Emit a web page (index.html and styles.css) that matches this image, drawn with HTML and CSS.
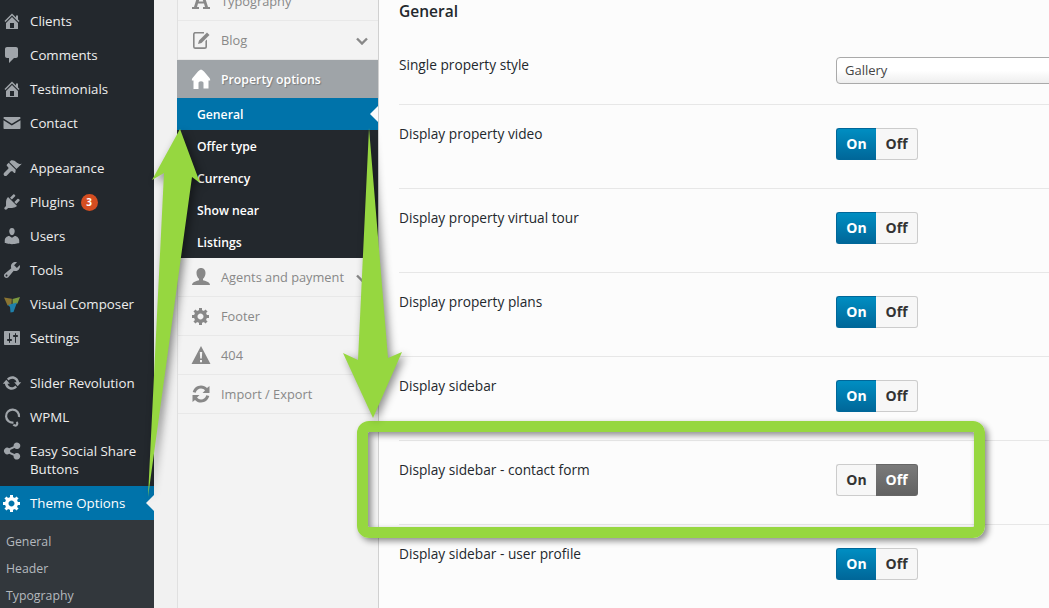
FILE: index.html
```html
<!DOCTYPE html>
<html lang="en">
<head>
<meta charset="utf-8">
<title>Theme Options</title>
<link rel="stylesheet" href="styles.css">
</head>
<body>
<svg class="defs" width="0" height="0" aria-hidden="true">
  <symbol id="i-home" viewBox="0 0 20 20"><path d="M16 8.5l1.53 1.53-1.06 1.06L10 4.62l-6.47 6.47-1.06-1.06L10 2.5l4 4v-2h2v4zm-6-2.46l6 5.99V18H4v-5.97zM12 17v-5H8v5h4z"/></symbol>
  <symbol id="i-comment" viewBox="0 0 20 20"><path d="M5 2h9c1.1 0 2 .9 2 2v7c0 1.1-.9 2-2 2h-2l-5 5v-5H5c-1.1 0-2-.9-2-2V4c0-1.1.9-2 2-2z"/></symbol>
  <symbol id="i-mail" viewBox="0 0 20 20"><path d="M3 4h14.5c.5 0 1 .4 1 1v.4l-8.7 5.4-8.3-5.4V5c0-.6.4-1 1-1zM1.5 7.300l8.300 5.300 8.700-5.300V15c0 .6-.5 1-1 1H2.500c-.6 0-1-.4-1-1z"/></symbol>
  <symbol id="i-brush" viewBox="0 0 20 20"><path d="M14.480 11.060L7.410 3.990l1.500-1.500c.5-.56 2.300-.47 3.510.32 1.210.8 1.430 1.280 2.910 2.100 1.180.64 2.450 1.260 4.450.85zm-.71.71L6.700 4.700 4.930 6.470c-.39.39-.39 1.020 0 1.410l1.060 1.060c.59.59.59 1.540 0 2.120L2.200 14.800c-.8.8-.8 1.900-.1 2.700.8.8 2 .7 2.800-.1l3.800-3.800c.59-.59 1.540-.59 2.120 0l1.060 1.060c.39.39 1.020.39 1.410 0z"/></symbol>
  <symbol id="i-plug" viewBox="0 0 20 20"><path d="M13.110 4.360L9.870 7.600 8 5.730l3.240-3.240c.35-.34 1.050-.2 1.560.32.52.51.66 1.210.31 1.550zm-8 1.770l.91-1.120 9.010 9.010-1.190.84c-.71.71-2.630 1.160-3.820 1.160H6.140L4.900 17.260c-.59.59-1.540.59-2.120 0-.59-.58-.59-1.530 0-2.120l1.240-1.240v-3.880c0-1.130.4-3.190 1.090-3.890zm7.260 3.970l3.240-3.240c.34-.35 1.040-.21 1.550.31.52.51.66 1.210.31 1.550l-3.240 3.250z"/></symbol>
  <symbol id="i-user" viewBox="0 0 20 20"><path d="M10 9.250c-2.270 0-2.730-3.440-2.730-3.440C7 4.020 7.820 2 9.970 2c2.160 0 2.980 2.020 2.710 3.810 0 0-.41 3.440-2.68 3.440zm0 2.570L12.720 10c2.390 0 4.520 2.330 4.520 4.530v2.490s-3.650 1.130-7.240 1.130c-3.650 0-7.240-1.130-7.240-1.130v-2.490c0-2.250 1.940-4.480 4.470-4.480z"/></symbol>
  <symbol id="i-wrench" viewBox="0 0 20 20"><path d="M16.680 9.770c-1.340 1.340-3.300 1.670-4.950.99l-5.410 6.520c-.99.99-2.590.99-3.580 0s-.99-2.590 0-3.570l6.520-5.420c-.68-1.650-.35-3.610.99-4.950 1.280-1.280 3.120-1.620 4.720-1.060l-2.890 2.890 2.820 2.820 2.860-2.870c.53 1.580.18 3.390-1.080 4.650zM3.810 16.210c.4.39 1.040.39 1.430 0 .4-.4.4-1.040 0-1.430-.39-.4-1.030-.4-1.430 0-.39.39-.39 1.030 0 1.430z"/></symbol>
  <symbol id="i-sliders" viewBox="0 0 20 20"><path d="M18 16V4c0-.55-.45-1-1-1H3c-.55 0-1 .45-1 1v12c0 .55.45 1 1 1h14c.55 0 1-.45 1-1zM8 11h1c.55 0 1 .45 1 1s-.45 1-1 1H8v1.500c0 .28-.22.5-.5.5s-.5-.22-.5-.5V13H6c-.55 0-1-.45-1-1s.45-1 1-1h1V5.500c0-.28.22-.5.5-.5s.5.22.5.5V11zm5-2h-1c-.55 0-1-.45-1-1s.45-1 1-1h1V5.500c0-.28.22-.5.5-.5s.5.22.5.5V7h1c.55 0 1 .45 1 1s-.45 1-1 1h-1v5.500c0 .28-.22.5-.5.5s-.5-.22-.5-.5V9z"/></symbol>
  <symbol id="i-update" viewBox="0 0 20 20"><path d="M10.200 3.280c3.530 0 6.430 2.610 6.920 6h2.080l-3.500 4-3.500-4h2.320c-.45-1.970-2.210-3.450-4.320-3.450-1.450 0-2.730.71-3.540 1.780L4.950 5.660C6.230 4.200 8.110 3.280 10.200 3.280zm-.4 13.440c-3.520 0-6.430-2.610-6.920-6H.8l3.500-4c1.170 1.330 2.330 2.670 3.500 4H5.480c.45 1.970 2.210 3.450 4.320 3.450 1.450 0 2.730-.71 3.540-1.780l1.710 1.950c-1.280 1.460-3.150 2.380-5.250 2.380z"/></symbol>
  <symbol id="i-share" viewBox="0 0 20 20"><path d="M15 1.500a3.300 3.300 0 1 1-2.500 5.500L8.100 9.100a3.300 3.300 0 0 1 0 1.800l4.400 2.100a3.300 3.300 0 1 1-.9 1.800l-4.400-2.100a3.300 3.300 0 1 1 0-5.400l4.400-2.100A3.300 3.300 0 0 1 15 1.500z"/></symbol>
  <symbol id="i-gear" viewBox="0 0 20 20"><path d="M18 12h-2.180c-.17.7-.44 1.350-.81 1.930l1.540 1.540-2.100 2.100-1.540-1.540c-.58.36-1.230.63-1.910.79V19H8v-2.180c-.68-.16-1.330-.43-1.910-.79l-1.540 1.540-2.120-2.120 1.540-1.540c-.36-.58-.63-1.230-.79-1.910H1V9.030h2.170c.16-.7.44-1.350.8-1.940L2.430 5.550l2.100-2.100 1.540 1.540c.58-.37 1.240-.64 1.930-.81V2h3v2.180c.68.16 1.330.43 1.910.79l1.540-1.540 2.120 2.120-1.540 1.540c.36.59.64 1.240.8 1.940H18V12zm-8.500 1.500c1.660 0 3-1.340 3-3s-1.340-3-3-3-3 1.340-3 3 1.340 3 3 3z"/></symbol>
  <symbol id="n-a" viewBox="0 0 20 20"><path d="M8 0h4l5 16h2v2h-7v-2h2l-1-3.500H7L6 16h2v2H1v-2h2zm2 3.500L7.700 10.500h4.600z"/></symbol>
  <symbol id="n-edit" viewBox="0 0 20 20"><path d="M3.500 2H13v1.600H4.500a.9.9 0 0 0-.9.9v11.900a.9.9 0 0 0 .9.9h9a.9.9 0 0 0 .9-.9V11L16 9.400v7.100A2.500 2.500 0 0 1 13.500 19h-9.500A2.500 2.500 0 0 1 2 16.500v-12A2.500 2.500 0 0 1 3.500 2zM16 2.500l2.500 2.500L10.500 13 7 14l1-3.500z"/></symbol>
  <symbol id="n-home" viewBox="0 0 20 20"><path d="M10 .5c1 .2 2 1 3 2l5.500 6.500c.5.6.7 1.500.7 2.500h-1.700v8h-5V14c0-1-1-1.800-2.500-1.800S7.500 13 7.500 14v6h-5v-8.500H.8c0-1 .2-1.900.7-2.500L7 2.500c1-1 2-1.800 3-2z"/></symbol>
  <symbol id="n-user" viewBox="0 0 20 20"><path d="M10 1c3 0 4.500 2.300 4.500 5s-1.300 5-2.500 5.800v1.400c2 .7 7 1.600 7 4.800H1c0-3.200 5-4.100 7-4.800v-1.400C6.800 11 5.500 8.700 5.500 6S7 1 10 1z"/></symbol>
  <symbol id="n-warn" viewBox="0 0 20 20"><path fill-rule="evenodd" d="M10 1l9.500 18H.5zM8.800 7l.4 6.500h1.600l.4-6.500zM9 15v2.200h2V15z"/></symbol>
  <symbol id="n-sync" viewBox="0 0 20 20"><path d="M10 1.500c2.500 0 4.500 1 6 2.600L18.500 2v7h-7l2.500-2.600C13 5.200 11.600 4.500 10 4.500c-2.600 0-4.700 1.800-5.300 4.200L1.700 8C2.700 4.300 6 1.500 10 1.500zM1.500 11h7L6 13.600c1 1.200 2.400 1.900 4 1.900 2.600 0 4.700-1.800 5.300-4.200l3 .7c-1 3.700-4.300 6.500-8.300 6.500-2.500 0-4.500-1-6-2.600L1.500 18z"/></symbol>
</svg>

<div class="page">
  <aside class="admin">
    <a class="item"><svg class="ico"><use href="#i-home"/></svg><span>Clients</span></a>
    <a class="item"><svg class="ico"><use href="#i-comment"/></svg><span>Comments</span></a>
    <a class="item"><svg class="ico"><use href="#i-home"/></svg><span>Testimonials</span></a>
    <a class="item"><svg class="ico"><use href="#i-mail"/></svg><span>Contact</span></a>
    <div class="sep"></div>
    <a class="item"><svg class="ico"><use href="#i-brush"/></svg><span>Appearance</span></a>
    <a class="item"><svg class="ico"><use href="#i-plug"/></svg><span>Plugins</span><b class="badge">3</b></a>
    <a class="item"><svg class="ico"><use href="#i-user"/></svg><span>Users</span></a>
    <a class="item"><svg class="ico"><use href="#i-wrench"/></svg><span>Tools</span></a>
    <a class="item"><svg class="ico" viewBox="0 0 20 20"><path class="vc-a" d="M2 3.500l7.800 1.300-.3 6-4 .7z"/><path class="vc-b" d="M10.500 5l7.500-2-2.500 6.500-4.800 1.200z"/><path class="vc-c" d="M6 11l9-2.500-3.500 9.500-3 .5-.5-5.500z"/></svg><span>Visual Composer</span></a>
    <a class="item"><svg class="ico"><use href="#i-sliders"/></svg><span>Settings</span></a>
    <div class="sep"></div>
    <a class="item"><svg class="ico"><use href="#i-update"/></svg><span>Slider Revolution</span></a>
    <a class="item"><svg class="ico" viewBox="0 0 20 20"><path class="wpml" d="M11.500 15.500a6.500 6.500 0 1 1 5.500-5.500M14.500 15a2 2 0 1 1-3 2.500"/></svg><span>WPML</span></a>
    <a class="item"><svg class="ico"><use href="#i-share"/></svg><span>Easy Social Share Buttons</span></a>
    <a class="item item-current"><svg class="ico"><use href="#i-gear"/></svg><span>Theme Options</span></a>
    <div class="sub">
      <a class="sub-item">General</a>
      <a class="sub-item">Header</a>
      <a class="sub-item">Typography</a>
    </div>
  </aside>

  <nav class="opts">
    <a class="opt"><svg class="opt-ico"><use href="#n-a"/></svg><span>Typography</span></a>
    <a class="opt"><svg class="opt-ico"><use href="#n-edit"/></svg><span>Blog</span><svg class="chev" viewBox="0 0 12 8"><path d="M1 1.500l5 5 5-5"/></svg></a>
    <a class="opt opt-open"><svg class="opt-ico"><use href="#n-home"/></svg><span>Property options</span></a>
    <div class="opt-sub">
      <a class="opt-link opt-link-on">General</a>
      <a class="opt-link">Offer type</a>
      <a class="opt-link">Currency</a>
      <a class="opt-link">Show near</a>
      <a class="opt-link">Listings</a>
    </div>
    <a class="opt"><svg class="opt-ico"><use href="#n-user"/></svg><span>Agents and payment</span><svg class="chev" viewBox="0 0 12 8"><path d="M1 1.500l5 5 5-5"/></svg></a>
    <a class="opt"><svg class="opt-ico"><use href="#i-gear"/></svg><span>Footer</span></a>
    <a class="opt"><svg class="opt-ico"><use href="#n-warn"/></svg><span>404</span></a>
    <a class="opt"><svg class="opt-ico"><use href="#n-sync"/></svg><span>Import / Export</span></a>
  </nav>

  <main class="main">
    <h2 class="title">General</h2>
    <div class="row row-first"><div class="label">Single property style</div><div class="field"><div class="select">Gallery</div></div></div>
    <div class="row"><div class="label">Display property video</div><div class="field"><div class="toggle"><span class="t-on t-blue">On</span><span class="t-off">Off</span></div></div></div>
    <div class="row"><div class="label">Display property virtual tour</div><div class="field"><div class="toggle"><span class="t-on t-blue">On</span><span class="t-off">Off</span></div></div></div>
    <div class="row"><div class="label">Display property plans</div><div class="field"><div class="toggle"><span class="t-on t-blue">On</span><span class="t-off">Off</span></div></div></div>
    <div class="row"><div class="label">Display sidebar</div><div class="field"><div class="toggle"><span class="t-on t-blue">On</span><span class="t-off">Off</span></div></div></div>
    <div class="row"><div class="label">Display sidebar - contact form</div><div class="field"><div class="toggle"><span class="t-on">On</span><span class="t-off t-grey">Off</span></div></div></div>
    <div class="row"><div class="label">Display sidebar - user profile</div><div class="field"><div class="toggle"><span class="t-on t-blue">On</span><span class="t-off">Off</span></div></div></div>
  </main>
</div>

<div class="callout"></div>
<svg class="arrows" viewBox="0 0 1049 608" width="1049" height="608" aria-hidden="true">
  <path d="M148 497L164 173 152 180 180 129 200 183 192 177z"/>
  <path d="M369 128L388 358 402 352 373 418 343 353 358 360z"/>
</svg>
</body>
</html>
```

FILE: styles.css
```css
* { box-sizing: border-box; }
html, body { margin: 0; height: 608px; overflow: hidden; }
body { position: relative; background: #f1f1f1; font-family: "Open Sans", sans-serif; }
a { display: flex; }
.defs { position: absolute; }

.page { display: flex; height: 608px; overflow: hidden; }

/* admin sidebar */
.admin { width: 154px; flex: none; background: #23282d; padding-top: 4px; color: #eee; font-size: 13.3px; line-height: 18px; }
.item { position: relative; align-items: flex-start; padding: 8px 4px 8px 30px; }
.sep { height: 11px; }
.ico { position: absolute; left: 2px; top: 7px; width: 20px; height: 20px; fill: #a0a5aa; }
.badge { width: 17px; height: 17px; margin: 1px 0 0 6px; border-radius: 50%; background: #d54e21; color: #fff; font-size: 10px; font-weight: 700; line-height: 17px; text-align: center; }
.vc-a { fill: #8a7432; }
.vc-b { fill: #7c9a40; }
.vc-c { fill: #1f80aa; }
.wpml { fill: none; stroke: #a0a5aa; stroke-width: 2.200; }
.item-current { background: #0073aa; color: #fff; }
.item-current .ico { fill: #fff; }
.item-current::after { content: ""; position: absolute; right: 0; top: 9px; border: 8px solid transparent; border-left-width: 0; border-right-color: #f1f1f1; }
.sub { background: #32373c; padding-top: 8px; height: 100px; color: #b4b9be; font-size: 12.3px; }
.sub-item { height: 27px; align-items: center; padding-left: 6px; }

/* options nav */
.opts { width: 202px; flex: none; margin-left: 23px; margin-top: -18px; height: 640px; background: #f3f3f3; border-left: 1px solid #e0e0e0; border-right: 1px solid #d0d0d0; font-size: 12.8px; color: #888; }
.opt { position: relative; height: 39px; align-items: center; padding-left: 43px; border-bottom: 1px solid #e8e8e8; }
.opt-ico { position: absolute; left: 13px; top: 9px; width: 20px; height: 20px; fill: #888; }
.chev { position: absolute; right: 10px; top: 16px; width: 12px; height: 8px; fill: none; stroke: #888; stroke-width: 2.400; }
.opt-open { height: 38px; margin-left: -1px; padding-left: 44px; border-bottom: 0; background: #9fa4a8; color: #fff; font-size: 12.3px; font-weight: 600; text-shadow: 1px 1px 1px rgba(0, 0, 0, .25); }
.opt-open .opt-ico { left: 14px; fill: #fff; }
.opt-sub { margin-left: -1px; background: #23282d; color: #fff; font-size: 12.2px; font-weight: 600; }
.opt-link { position: relative; height: 32px; align-items: center; padding-left: 20px; }
.opt-link-on { background: #0073aa; }
.opt-link-on::after { content: ""; position: absolute; right: 0; top: 8px; border: 8px solid transparent; border-left-width: 0; border-right-color: #fcfcfc; }

/* main */
.main { flex: 1; min-width: 0; overflow: hidden; background: #fcfcfc; padding-left: 20px; }
.title { margin: 0; height: 36px; font-size: 15.5px; font-weight: 600; line-height: 22px; color: #23282d; }
.row { display: flex; height: 84px; width: 700px; padding-top: 20px; border-bottom: 1px solid #e7e7e7; font-size: 13.7px; line-height: 18px; color: #23282d; }
.row-first { height: 69px; }
.label { width: 437px; flex: none; }
.field { padding-top: 3px; }
.row-first .field { padding-top: 1px; }
.select { width: 300px; height: 27px; padding-left: 8px; border: 1px solid #aaa; border-radius: 4px; background: linear-gradient(#fff 50%, #eee); font-size: 13px; line-height: 24px; color: #444; }
.toggle { display: flex; width: 82px; height: 32px; font-size: 14px; font-weight: 700; line-height: 30px; text-align: center; color: #333; }
.t-on, .t-off { border: 1px solid #ccc; background: #f7f7f7; }
.t-on { width: 40px; border-right: 0; border-radius: 3px 0 0 3px; }
.t-off { width: 42px; border-left: 0; border-radius: 0 3px 3px 0; }
.t-blue { border-color: #006799; background: linear-gradient(#008ec2, #006799); color: #fff; }
.t-grey { border-color: #666; background: linear-gradient(#7a7a7a, #626262); color: #fff; }

/* annotations laid over the screenshot */
.callout { position: absolute; left: 357px; top: 421px; width: 628px; height: 117px; border: 11px solid #96d740; border-radius: 12px; box-shadow: 3px 3px 6px rgba(0, 0, 0, .45), inset 3px 3px 6px rgba(0, 0, 0, .45); }
.arrows { position: absolute; left: 0; top: 0; fill: #96d740; filter: drop-shadow(3px 3px 4px rgba(0, 0, 0, .45)); }
```
